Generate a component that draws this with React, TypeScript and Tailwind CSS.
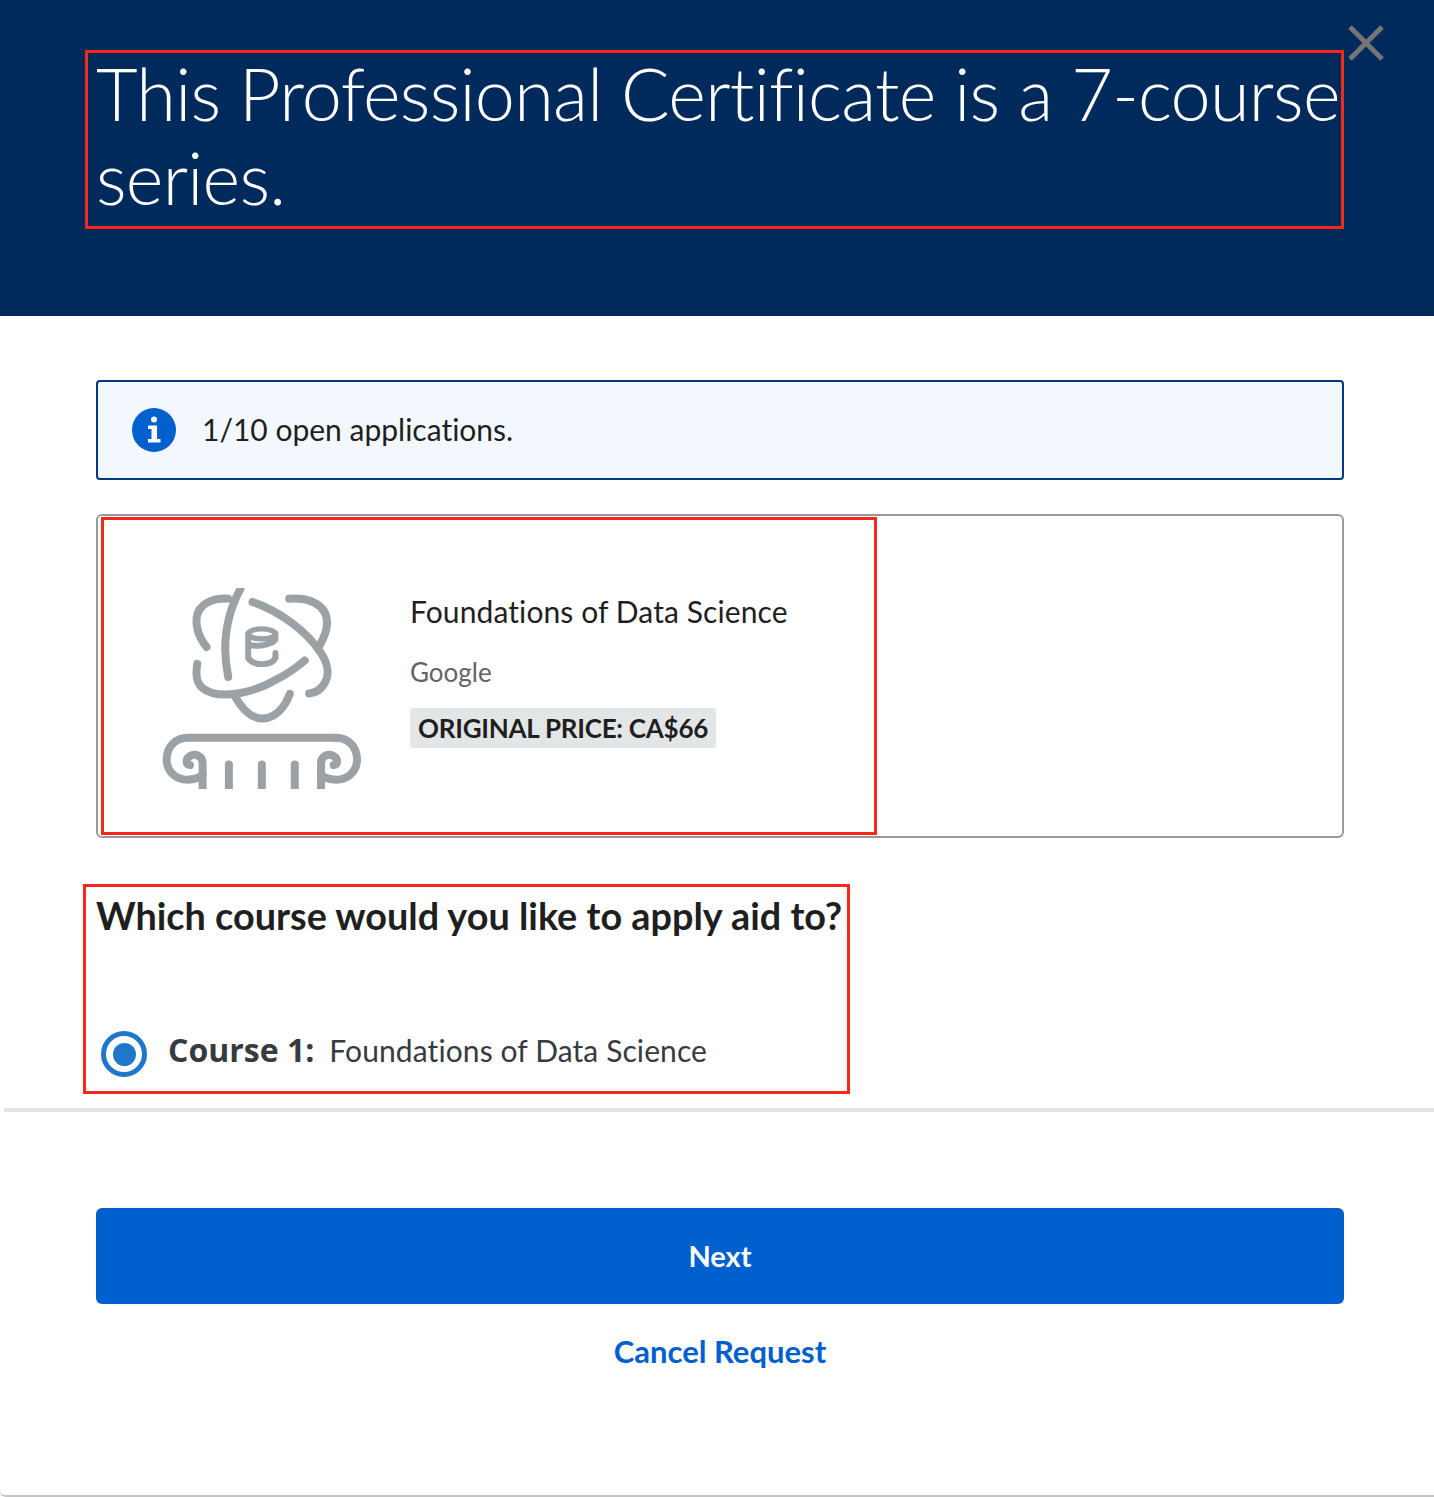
const sans = { fontFamily: '"Lato", "Noto Sans", sans-serif' };

function CourseLogo() {
	return (
		<svg viewBox="240 230 610 604" className="w-[203px] h-[201px] shrink-0 mt-[69px]" fill="none" stroke="#9CA1A6" strokeWidth="24" strokeLinecap="round">
			<path d="M380 407C350 370 348 335 350 320C355 275 400 260 445 262" />
			<path d="M482 232C440 310 425 400 445 497" />
			<path d="M628 262C690 258 742 280 742 335C742 360 730 385 718 405" />
			<path d="M518 272C600 300 680 360 720 420C745 455 750 490 735 515C725 535 705 545 688 547" />
			<path d="M352 458C345 500 350 530 395 545C450 560 530 540 590 505C630 485 655 465 675 448" />
			<path d="M465 555C490 600 520 622 548 622C585 622 615 590 630 548" />
			<ellipse cx="546" cy="368" rx="41" ry="15" strokeWidth="16" />
			<path d="M505 368V440C520 465 575 465 587 440V425M587 368V385C575 402 525 408 505 400" strokeWidth="18" />
			<path d="M767 680H325C285 680 260 708 260 745C260 782 288 806 322 806C345 806 360 800 368 790" />
			<path d="M368 860V755C368 735 345 725 330 735C315 745 318 760 330 762" />
			<path d="M724 860V755C724 735 747 725 762 735C777 745 774 760 762 762" />
			<path d="M767 680C807 680 832 708 832 745C832 782 804 806 770 806C747 806 732 800 724 790" />
			<path d="M447 760V860M546 760V860M645 760V860" />
		</svg>
	);
}

export default function App() {
	return (
		<div className="w-[1434px] h-[1497px] bg-white flex flex-col overflow-hidden border-b-2 border-[#C4C4C4] rounded-bl-[6px] [font-variant-ligatures:none]" style={sans}>
			<header className="relative h-[316px] bg-[#002A5B] pl-[96px] pr-[90px] pt-[51px] shrink-0">
				<h1 className="relative text-[72px] leading-[84px] font-light tracking-[-0.75px] text-white">
					This Professional Certificate is a 7&#8209;course series.
					<span className="absolute left-[-11px] top-[-1px] w-[1259px] h-[179px] border-[3px] border-[#F5281A]" />
				</h1>
				<svg viewBox="0 0 36 36" className="absolute left-[1348px] top-[25px] w-[36px] h-[36px]" stroke="#757575" strokeWidth="5">
					<path d="M2 2L34 34M34 2L2 34" />
				</svg>
			</header>

			<main className="flex flex-col pl-[96px] pr-[90px] pt-[64px]">
				<div className="h-[100px] border-2 border-[#00397F] rounded-[4px] bg-[#F3F8FF] flex items-center pl-[34px] gap-[26px]">
					<svg viewBox="0 0 44 44" className="w-[44px] h-[44px] shrink-0">
						<circle cx="22" cy="22" r="22" fill="#0060CE" />
						<circle cx="22" cy="11.5" r="3" fill="#fff" />
						<path d="M16 17.5H25V31H28.5V34.5H16V31H19.5V21H16Z" fill="#fff" />
					</svg>
					<p className="text-[30px] leading-[40px] pb-[2px] text-[#1F1F1F]">1/10 open applications.</p>
				</div>

				<div className="relative mt-[34px] h-[324px] border-2 border-[#999999] rounded-[6px] flex items-start pl-[62px] gap-[47px]">
					<span className="absolute left-[3px] top-[1px] w-[776px] h-[318px] border-[3px] border-[#F5281A]" />
					<div className="pt-[3px]">
						<CourseLogo />
					</div>
					<div className="flex flex-col items-start mt-[75px]">
						<p className="text-[30px] leading-[40px] tracking-[0.1px] text-[#1F1F1F]">Foundations of Data Science</p>
						<p className="mt-[24px] text-[26px] leading-[34px] text-[#636363]">Google</p>
						<span className="mt-[19px] h-[40px] px-[8px] flex items-center rounded-[3px] bg-[#E3E6E6] text-[26px] font-bold tracking-[-0.25px] text-[#1F1F1F]">
							ORIGINAL PRICE: CA$66
						</span>
					</div>
				</div>

				<section className="relative mt-[54px] h-[212px]">
					<span className="absolute left-[-13px] top-[-8px] w-[767px] h-[210px] border-[3px] border-[#F5281A]" />
					<h2 className="text-[37.8px] leading-[48px] font-bold text-[#1F1F1F]">Which course would you like to apply aid to?</h2>
					<div className="mt-[86px] flex items-center pl-[5px]">
						<span className="w-[46px] h-[46px] rounded-full border-[5px] border-[#1F77C9] flex items-center justify-center shrink-0">
							<span className="w-[23px] h-[23px] rounded-full bg-[#1F77C9]" />
						</span>
						<span className="ml-[21px] pb-[8px] text-[32px] font-bold text-[#373A3F] font-['Open_Sans']">Course 1:</span>
						<span className="ml-[15px] pb-[8px] text-[30px] tracking-[0.1px] text-[#373A3F]">Foundations of Data Science</span>
					</div>
				</section>
			</main>

			<div className="ml-[4px] mt-[4px] h-[4px] bg-[#E3E6E6] shrink-0" />

			<footer className="flex flex-col items-stretch pl-[96px] pr-[90px] pt-[96px]">
				<button className="h-[96px] rounded-[6px] bg-[#0060CE] text-white text-[29px] font-bold">Next</button>
				<a className="mt-[27px] text-center text-[#0060CE] text-[31px] leading-[40px] font-bold">Cancel Request</a>
			</footer>
		</div>
	);
}
